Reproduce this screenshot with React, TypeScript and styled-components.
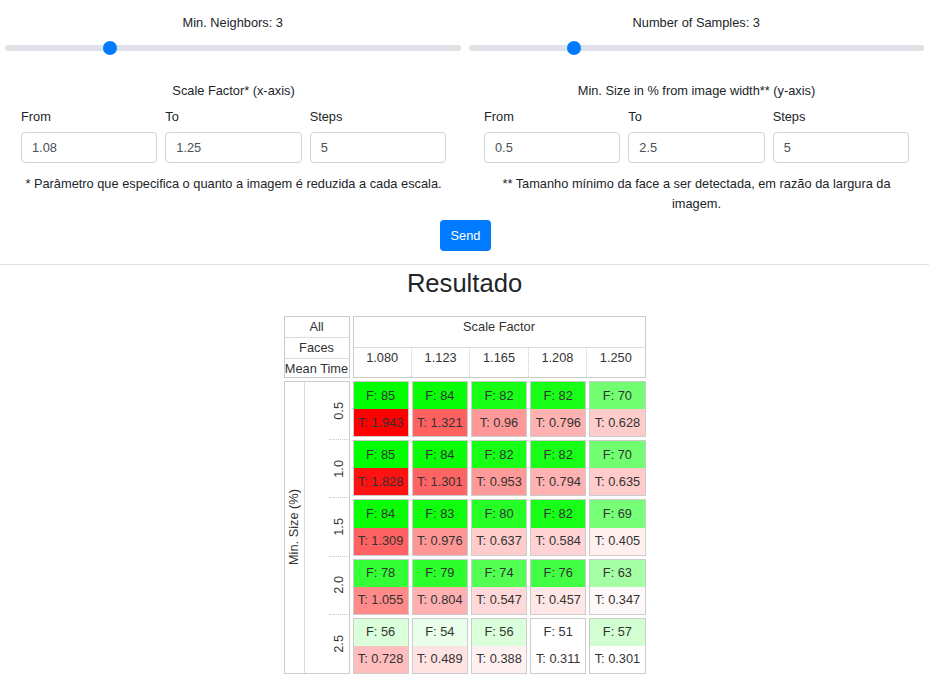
import React from 'react';
import styled, { createGlobalStyle } from 'styled-components';

const Global = createGlobalStyle`
  html, body { margin: 0; padding: 0; background: #fff; }
  body {
    font-family: "Liberation Sans", Arial, sans-serif;
    font-size: 12.8px;
    line-height: 20px;
    color: #212529;
  }
  * { box-sizing: border-box; }
`;

const Page = styled.div`
  width: 100%;
  padding-bottom: 10px;
`;

const SliderRow = styled.div`
  display: grid;
  grid-template-columns: 1fr 1fr;
  column-gap: 8px;
  padding: 13px 5px 0;
`;

const SliderBlock = styled.div`
  display: flex;
  flex-direction: column;
  gap: 8px;
`;

const CenterLabel = styled.div`
  text-align: center;
`;

const Range = styled.input.attrs({ type: 'range' })`
  -webkit-appearance: none;
  appearance: none;
  display: block;
  width: 100%;
  height: 14px;
  margin: 0;
  padding: 0;
  background: transparent;
  &::-webkit-slider-runnable-track {
    height: 6px;
    background: #dee2e6;
    border-radius: 3px;
  }
  &::-webkit-slider-thumb {
    -webkit-appearance: none;
    width: 14px;
    height: 14px;
    border-radius: 50%;
    background: #007bff;
    border: 0;
    margin-top: -4px;
  }
`;

const ParamRow = styled.div`
  display: grid;
  grid-template-columns: 1fr 1fr;
  margin-top: 26px;
`;

const ParamGroup = styled.div<{ $right?: boolean }>`
  display: flex;
  flex-direction: column;
  padding: ${(p) => (p.$right ? '0 20px 0 19.5px' : '0 18.5px 0 21px')};
`;

const FieldGrid = styled.div`
  display: grid;
  grid-template-columns: repeat(3, 1fr);
  column-gap: 8px;
  margin-top: 6px;
`;

const Field = styled.label`
  display: flex;
  flex-direction: column;
  gap: 5px;
`;

const TextInput = styled.input`
  height: 31px;
  width: 100%;
  border: 1px solid #ced4da;
  border-radius: 4px;
  padding: 0 10px;
  font: inherit;
  color: #495057;
  background: #fff;
`;

const Note = styled.div`
  margin-top: 11px;
  text-align: center;
`;

const SendWrap = styled.div`
  display: flex;
  justify-content: center;
  margin-top: 6px;
  padding-left: 2px;
`;

const SendButton = styled.button`
  height: 31px;
  padding: 0 10.5px;
  border: 0;
  border-radius: 4px;
  background: #007bff;
  color: #fff;
  font: inherit;
`;

const Divider = styled.hr`
  margin: 13px 0 0;
  border: 0;
  border-top: 1px solid #dee2e6;
`;

const Heading = styled.h2`
  margin: 3px 0 0;
  font-size: 25.6px;
  font-weight: 400;
  line-height: 30px;
  text-align: center;
  color: #212529;
`;

const ResultTable = styled.div`
  display: grid;
  grid-template-columns: 66px 293px;
  grid-template-rows: 62px 293px;
  gap: 3px;
  justify-content: center;
  margin-top: 18px;
  color: #333;
`;

const HeadLeft = styled.div`
  display: grid;
  grid-template-rows: repeat(3, 1fr);
  border: 1px solid #ccc;
`;

const HeadLeftCell = styled.div<{ $last?: boolean }>`
  display: flex;
  align-items: center;
  justify-content: center;
  white-space: nowrap;
  border-bottom: ${(p) => (p.$last ? '0' : '1px solid #ddd')};
`;

const HeadRight = styled.div`
  display: flex;
  flex-direction: column;
  border: 1px solid #ccc;
`;

const ScaleTitle = styled.div`
  height: 30px;
  text-align: center;
`;

const ValueRow = styled.div`
  flex: 1;
  display: flex;
  border-top: 1px solid #ddd;
`;

const ValueCell = styled.div<{ $first?: boolean }>`
  flex: 1;
  text-align: center;
  border-left: ${(p) => (p.$first ? '0' : '1px dotted #ccc')};
`;

const BodyLeft = styled.div`
  display: flex;
  border: 1px solid #ccc;
`;

const AxisLabel = styled.div`
  width: 20px;
  border-right: 1px solid #ddd;
  display: flex;
  align-items: center;
  justify-content: center;
`;

const Vertical = styled.span`
  writing-mode: vertical-rl;
  transform: rotate(180deg);
  white-space: nowrap;
`;

const RowLabels = styled.div`
  flex: 1;
  display: flex;
  flex-direction: column;
`;

const RowLabel = styled.div`
  flex: 1;
  display: flex;
  justify-content: flex-end;
`;

const RowLabelBox = styled.div<{ $last?: boolean }>`
  width: 20px;
  display: flex;
  align-items: center;
  justify-content: center;
  border-bottom: ${(p) => (p.$last ? '0' : '1px dotted #ccc')};
`;

const CellGrid = styled.div`
  display: grid;
  grid-template-columns: repeat(5, 1fr);
  grid-template-rows: repeat(5, 1fr);
  gap: 3px;
`;

const Cell = styled.div`
  display: flex;
  flex-direction: column;
  border: 1px solid #ccc;
`;

const Half = styled.div`
  flex: 1;
  display: flex;
  align-items: center;
  justify-content: center;
  white-space: nowrap;
  color: #333;
`;

const faces = [
  [85, 84, 82, 82, 70],
  [85, 84, 82, 82, 70],
  [84, 83, 80, 82, 69],
  [78, 79, 74, 76, 63],
  [56, 54, 56, 51, 57],
];

const times = [
  ['1.943', '1.321', '0.96', '0.796', '0.628'],
  ['1.828', '1.301', '0.953', '0.794', '0.635'],
  ['1.309', '0.976', '0.637', '0.584', '0.405'],
  ['1.055', '0.804', '0.547', '0.457', '0.347'],
  ['0.728', '0.489', '0.388', '0.311', '0.301'],
];

const scales = ['1.080', '1.123', '1.165', '1.208', '1.250'];
const sizes = ['0.5', '1.0', '1.5', '2.0', '2.5'];

const fMin = 51;
const fMax = 85;
const tMin = 0.301;
const tMax = 1.943;

const greenFor = (f: number) => {
  const t = (f - fMin) / (fMax - fMin);
  const c = Math.round(255 * (1 - t));
  return `rgb(${c}, 255, ${c})`;
};

const redFor = (v: number) => {
  const t = (v - tMin) / (tMax - tMin);
  const c = Math.round(255 * (1 - t));
  return `rgb(255, ${c}, ${c})`;
};

type ParamProps = {
  title: string;
  values: [string, string, string];
  note: string;
  right?: boolean;
};

const Params = ({ title, values, note, right }: ParamProps) => (
  <ParamGroup $right={right}>
    <CenterLabel>{title}</CenterLabel>
    <FieldGrid>
      {['From', 'To', 'Steps'].map((l, i) => (
        <Field key={l}>
          <span>{l}</span>
          <TextInput defaultValue={values[i]} />
        </Field>
      ))}
    </FieldGrid>
    <Note>{note}</Note>
  </ParamGroup>
);

export default function App() {
  return (
    <Page>
      <Global />
      <SliderRow>
        <SliderBlock>
          <CenterLabel>Min. Neighbors: 3</CenterLabel>
          <Range min={1} max={10} defaultValue={3} />
        </SliderBlock>
        <SliderBlock>
          <CenterLabel>Number of Samples: 3</CenterLabel>
          <Range min={1} max={10} defaultValue={3} />
        </SliderBlock>
      </SliderRow>
      <ParamRow>
        <Params
          title="Scale Factor* (x-axis)"
          values={['1.08', '1.25', '5']}
          note="* Parâmetro que especifica o quanto a imagem é reduzida a cada escala."
        />
        <Params
          right
          title="Min. Size in % from image width** (y-axis)"
          values={['0.5', '2.5', '5']}
          note="** Tamanho mínimo da face a ser detectada, em razão da largura da imagem."
        />
      </ParamRow>
      <SendWrap>
        <SendButton>Send</SendButton>
      </SendWrap>
      <Divider />
      <Heading>Resultado</Heading>
      <ResultTable>
        <HeadLeft>
          <HeadLeftCell>All</HeadLeftCell>
          <HeadLeftCell>Faces</HeadLeftCell>
          <HeadLeftCell $last>Mean Time</HeadLeftCell>
        </HeadLeft>
        <HeadRight>
          <ScaleTitle>Scale Factor</ScaleTitle>
          <ValueRow>
            {scales.map((s, i) => (
              <ValueCell key={s} $first={i === 0}>
                {s}
              </ValueCell>
            ))}
          </ValueRow>
        </HeadRight>
        <BodyLeft>
          <AxisLabel>
            <Vertical>Min. Size (%)</Vertical>
          </AxisLabel>
          <RowLabels>
            {sizes.map((s, i) => (
              <RowLabel key={s}>
                <RowLabelBox $last={i === sizes.length - 1}>
                  <Vertical>{s}</Vertical>
                </RowLabelBox>
              </RowLabel>
            ))}
          </RowLabels>
        </BodyLeft>
        <CellGrid>
          {faces.map((row, r) =>
            row.map((f, c) => (
              <Cell key={`${r}-${c}`}>
                <Half style={{ background: greenFor(f) }}>F: {f}</Half>
                <Half style={{ background: redFor(parseFloat(times[r][c])) }}>
                  T: {times[r][c]}
                </Half>
              </Cell>
            ))
          )}
        </CellGrid>
      </ResultTable>
    </Page>
  );
}
